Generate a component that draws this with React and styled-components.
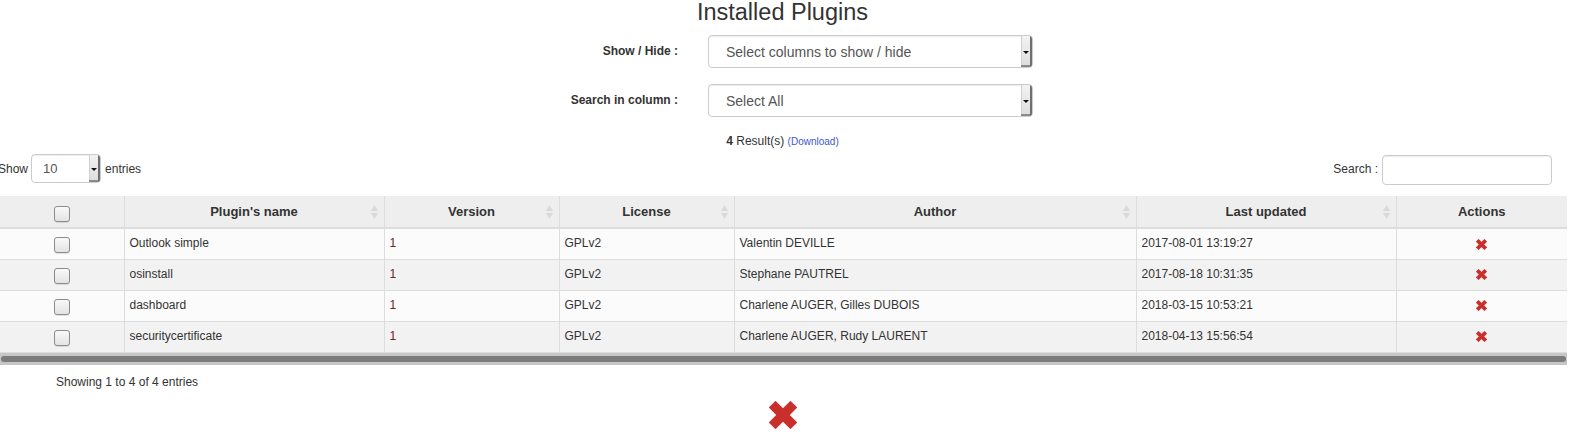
import { createGlobalStyle, styled } from "styled-components";

const GlobalStyle = createGlobalStyle`
  html, body {
    margin: 0;
    padding: 0;
    background: #ffffff;
  }
  body {
    font-family: "Liberation Sans", Arial, sans-serif;
    font-size: 12px;
    color: #333333;
    overflow: hidden;
  }
`;

const COLUMNS = [
  { key: "check", width: 124 },
  { key: "name", width: 260, title: "Plugin's name", sortable: true },
  { key: "version", width: 175, title: "Version", sortable: true },
  { key: "license", width: 175, title: "License", sortable: true },
  { key: "author", width: 402, title: "Author", sortable: true },
  { key: "updated", width: 260, title: "Last updated", sortable: true },
  { key: "actions", width: 171, title: "Actions" },
];

const PLUGINS = [
  { name: "Outlook simple", version: "1", license: "GPLv2", author: "Valentin DEVILLE", updated: "2017-08-01 13:19:27" },
  { name: "osinstall", version: "1", license: "GPLv2", author: "Stephane PAUTREL", updated: "2017-08-18 10:31:35" },
  { name: "dashboard", version: "1", license: "GPLv2", author: "Charlene AUGER, Gilles DUBOIS", updated: "2018-03-15 10:53:21" },
  { name: "securitycertificate", version: "1", license: "GPLv2", author: "Charlene AUGER, Rudy LAURENT", updated: "2018-04-13 15:56:54" },
];

const RemoveIcon = ({ size }) => (
  <svg width={size} height={size} viewBox="0 0 28 28">
    <g fill="#c9302c">
      <rect x="-1.3" y="9.25" width="30.6" height="9.5" transform="rotate(45 14 14)" />
      <rect x="-1.3" y="9.25" width="30.6" height="9.5" transform="rotate(-45 14 14)" />
    </g>
  </svg>
);

const SortIcon = () => (
  <SortMark width="7" height="14" viewBox="0 0 7 14">
    <path d="M0 6 L3.5 0 L7 6 Z" fill="#d9d9d9" />
    <path d="M0 8 L3.5 14 L7 8 Z" fill="#d9d9d9" />
  </SortMark>
);

const App = () => {
  return (
    <Page>
      <GlobalStyle />
      <Title>Installed Plugins</Title>

      <FilterForm>
        <FieldLabel>Show / Hide :</FieldLabel>
        <Dropdown>
          <span>Select columns to show / hide</span>
          <DropArrow />
        </Dropdown>
        <FieldLabel>Search in column :</FieldLabel>
        <Dropdown>
          <span>Select All</span>
          <DropArrow />
        </Dropdown>
      </FilterForm>

      <Results>
        <b>4</b> Result(s) <DownloadLink>(Download)</DownloadLink>
      </Results>

      <Toolbar>
        <Length>
          Show
          <SmallDropdown>
            <span>10</span>
            <DropArrow />
          </SmallDropdown>
          entries
        </Length>
        <SearchBox>
          Search :
          <SearchInput />
        </SearchBox>
      </Toolbar>

      <Table>
        <colgroup>
          {COLUMNS.map((c) => (
            <col key={c.key} style={{ width: c.width }} />
          ))}
        </colgroup>
        <thead>
          <tr>
            {COLUMNS.map((c) => (
              <Th key={c.key}>
                {c.key === "check" ? <Checkbox /> : c.title}
                {c.sortable && <SortIcon />}
              </Th>
            ))}
          </tr>
        </thead>
        <tbody>
          {PLUGINS.map((p, i) => (
            <Row key={p.name} $even={i % 2 === 1}>
              <Td $center>
                <Checkbox />
              </Td>
              <Td>{p.name}</Td>
              <Td $accent>{p.version}</Td>
              <Td>{p.license}</Td>
              <Td>{p.author}</Td>
              <Td>{p.updated}</Td>
              <Td $center>
                <ActionIcon>
                  <RemoveIcon size={11} />
                </ActionIcon>
              </Td>
            </Row>
          ))}
        </tbody>
      </Table>
      <ScrollTrack>
        <ScrollThumb />
      </ScrollTrack>

      <Info>Showing 1 to 4 of 4 entries</Info>

      <BigRemove>
        <RemoveIcon size={28} />
      </BigRemove>
    </Page>
  );
};

export default App;

const Page = styled.div`
  width: 1565px;
`;
const Title = styled.h2`
  margin: 0;
  text-align: center;
  font-size: 23.5px;
  font-weight: normal;
  line-height: 25px;
  color: #333333;
`;
const FilterForm = styled.div`
  display: grid;
  grid-template-columns: 678px 325px;
  column-gap: 30px;
  row-gap: 16px;
  align-items: center;
  margin-top: 10px;
`;
const FieldLabel = styled.label`
  text-align: right;
  font-weight: bold;
  font-size: 12px;
  margin-top: -2px;
`;
const Dropdown = styled.div`
  position: relative;
  height: 33px;
  box-sizing: border-box;
  border: 1px solid #cccccc;
  border-radius: 4px;
  box-shadow: inset 0 1px 1px rgba(0, 0, 0, 0.075);
  display: flex;
  align-items: center;
  padding-left: 17px;
  font-size: 14px;
  color: #555555;
  overflow: hidden;
`;
const SmallDropdown = styled(Dropdown)`
  width: 70px;
  height: 29px;
  padding-left: 11px;
  font-size: 13px;
  margin: 0 4px 0 3px;
`;
const DropArrow = styled.i`
  position: absolute;
  top: 0;
  right: 0;
  bottom: 0;
  width: 11px;
  background: linear-gradient(#f2f2f2, #dddddd);
  box-shadow: inset -2px 0 0 #6e6e6e, inset 0 -2px 0 #8a8a8a, inset 1px 0 0 #d0d0d0;
  &::after {
    content: "";
    position: absolute;
    left: 2px;
    top: 50%;
    margin-top: -1px;
    border-left: 3px solid transparent;
    border-right: 3px solid transparent;
    border-top: 3px solid #111111;
  }
`;
const Results = styled.div`
  margin-top: 16px;
  text-align: center;
  line-height: 17px;
  font-size: 12px;
`;
const DownloadLink = styled.a`
  font-size: 10px;
  color: #3b57cc;
  cursor: pointer;
`;
const Toolbar = styled.div`
  display: flex;
  justify-content: space-between;
  align-items: center;
  margin-top: 5px;
  padding-right: 13px;
`;
const Length = styled.div`
  display: flex;
  align-items: center;
  margin-left: -2px;
  margin-top: -2px;
`;
const SearchBox = styled.div`
  display: flex;
  align-items: center;
  gap: 4px;
  margin-top: -1px;
`;
const SearchInput = styled.div`
  width: 170px;
  height: 30px;
  box-sizing: border-box;
  border: 1px solid #cccccc;
  border-radius: 4px;
  box-shadow: inset 0 1px 1px rgba(0, 0, 0, 0.075);
  transform: translateY(1px);
`;
const Table = styled.table`
  margin-top: 12px;
  width: 1567px;
  table-layout: fixed;
  border-collapse: collapse;
  font-size: 12px;
`;
const Th = styled.th`
  position: relative;
  height: 32px;
  padding: 0 5px;
  box-sizing: border-box;
  background: #eeeeee;
  font-size: 13px;
  font-weight: bold;
  text-align: center;
  border-left: 1px solid #dddddd;
  border-bottom: 2px solid #dddddd;
  &:first-child {
    border-left: none;
  }
`;
const SortMark = styled.svg`
  position: absolute;
  right: 6px;
  top: 50%;
  margin-top: -7px;
`;
const Row = styled.tr`
  background: ${(p) => (p.$even ? "#f2f2f2" : "#fbfbfb")};
`;
const Td = styled.td`
  height: 31px;
  padding: 0 5px 1px;
  box-sizing: border-box;
  border-left: 1px solid #dddddd;
  border-bottom: 1px solid #dddddd;
  text-align: ${(p) => (p.$center ? "center" : "left")};
  color: ${(p) => (p.$accent ? "#6e2424" : "#333333")};
  white-space: nowrap;
  &:first-child {
    border-left: none;
  }
`;
const Checkbox = styled.span`
  display: inline-block;
  vertical-align: middle;
  width: 16px;
  height: 16px;
  box-sizing: border-box;
  margin-top: 4px;
  border: 1px solid #8c8c8c;
  border-radius: 3px;
  background: linear-gradient(#f9f9f9, #e3e3e3);
  box-shadow: 0 1px 0 rgba(0, 0, 0, 0.1);
`;
const ActionIcon = styled.span`
  display: inline-flex;
  vertical-align: middle;
  cursor: pointer;
`;
const ScrollTrack = styled.div`
  width: 1567px;
  height: 12px;
  box-sizing: border-box;
  padding: 3px 1px;
  background: #c6c6c6;
`;
const ScrollThumb = styled.div`
  height: 6px;
  border-radius: 3px;
  background: #7b7b7b;
`;
const Info = styled.div`
  margin-top: 9px;
  padding-left: 56px;
  line-height: 17px;
`;
const BigRemove = styled.div`
  display: flex;
  justify-content: center;
  margin-top: 10px;
  cursor: pointer;
`;
